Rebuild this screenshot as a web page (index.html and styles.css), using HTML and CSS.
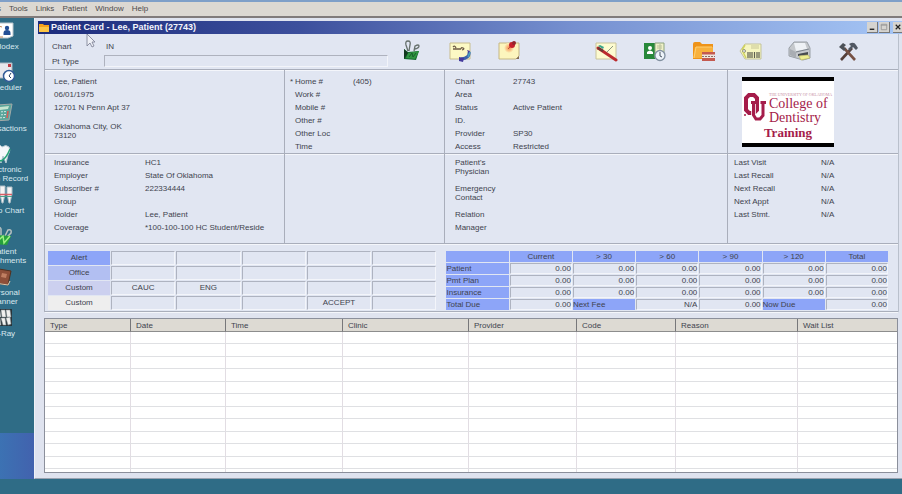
FILE: index.html
```html
<!DOCTYPE html>
<html lang="en">
<head>
<meta charset="utf-8">
<title>Patient Card</title>
<link rel="stylesheet" href="styles.css">
</head>
<body>
<nav class="menubar">
  <button>s</button><button>Tools</button><button>Links</button><button>Patient</button><button>Window</button><button>Help</button>
</nav>
<div class="desktop">
  <aside class="launcher">
    <button class="app"><svg viewBox="0 0 32 21"><path d="M4 3h14v13H4z" fill="#e9edf0"/><path d="M16 2h14v13l-5 2h-9z" fill="#fff" stroke="#b8c4cc"/><circle cx="24" cy="7" r="2.2" fill="#234f96"/><path d="M20.500 14v-2q0-3 3.500-3t3.500 3v2z" fill="#234f96"/><path d="M12 4l7 2M11 16h9" stroke="#c4885b"/></svg><span>Rolodex</span></button>
    <button class="app"><svg viewBox="0 0 32 21"><path d="M6 1h23v15H6z" fill="#e8e8ec" stroke="#aab4be"/><path d="M8 4h9v9H8z" fill="#d3d6dc"/><path d="M25 2h3v3h-3z" fill="#c23b43"/><circle cx="26" cy="14" r="5.500" fill="#fff" stroke="#315b98" stroke-width="1.500"/><path d="M28 11l-2 3 2 2" fill="none" stroke="#253c60"/></svg><span>Scheduler</span></button>
    <button class="app"><svg viewBox="0 0 32 21"><path d="M14 2l15-1-3 16-15 1z" fill="#5aa59b" stroke="#a2aaa8"/><path d="M17 4l9-1-1 3-8 1z" fill="#c7e5d0"/><path d="M15 9l9-.5M15 12l8-.5M14 15l8-.5" stroke="#d2e7e2" stroke-dasharray="2 1"/><path d="M25 8l-1 7" stroke="#d95b54" stroke-width="1.500"/></svg><span>Transactions</span></button>
    <button class="app"><svg viewBox="0 0 32 21"><path d="M12 3q4-4 7 0 4-3 7 0 2 4-1 8l-2 8-3-7-2 7-4-8q-3-4-2-8z" fill="#f5f8fa" stroke="#b9cbd3"/><path d="M12 14l6 3q5-2 9-12" fill="none" stroke="#27a477" stroke-width="1.500"/></svg><span>Electronic<br>Exam Record</span></button>
    <button class="app"><svg viewBox="0 0 32 21"><path d="M10 2h5v7l-2 9h-1l-2-9zM17 1h5v8l-2 9h-1l-2-9zM24 2h5v7l-2 9h-1l-2-9z" fill="#f4f4f4" stroke="#aebfc7"/><path d="M9 9.500h20" stroke="#d65d64" stroke-width="1.500"/><path d="M9 11.500h20" stroke="#49a28b"/></svg><span>Perio Chart</span></button>
    <button class="app"><svg viewBox="0 0 32 21"><path d="M14 10V3q3-3 4 0v7M22 10l3-6q4-1 3 3l-4 4" fill="none" stroke="#b6c0c0" stroke-width="1.500"/><path d="M12 9l16 1-4 9-13-1z" fill="#25a13b"/><path d="M14 16l6-6 1 7 6-7" fill="none" stroke="#9cf183" stroke-width="1.500"/></svg><span>Patient<br>Attachments</span></button>
    <button class="app"><svg viewBox="0 0 32 21"><path d="M16 2l12 2-3 14-13-2z" fill="#8e4f39" stroke="#50301f"/><path d="M12 16l13 2 2-4" fill="none" stroke="#e0cbb0"/><path d="M19 6l5 1-1 4-5-1z" fill="#c07f62"/></svg><span>Personal<br>Planner</span></button>
    <button class="app"><svg viewBox="0 0 32 21"><path d="M5 1h24v17H5z" fill="#29343a"/><path d="M13 3h4l1 6h-4zM18 2h4l1 7h-4zM23 2h4l1 7h-4zM13 11l4-1 1 7h-3zM18 10h4l1 7h-3zM23 10l4-1 1 7-3 1z" fill="#f1f1ef" stroke="#8b9699" stroke-width=".5"/></svg><span>X-Ray</span></button>
    <div class="launcher-foot"></div>
  </aside>

  <main class="window">
    <header class="titlebar">
      <svg class="folder" viewBox="0 0 12 10"><path d="M1 1h4l1 1h5v7H1z" fill="#f7a21b"/><path d="M1 4h10v5H1z" fill="#fdc544"/></svg>
      <h1>Patient Card - Lee, Patient (27743)</h1>
      <div class="controls">
        <button aria-label="Minimize"><svg viewBox="0 0 11 11"><path d="M3 8h5" stroke="#222" stroke-width="1.500"/></svg></button>
        <button aria-label="Maximize"><svg viewBox="0 0 11 11"><path d="M2.500 2.500h6v6h-6zM2 3.500h7" fill="none" stroke="#999"/></svg></button>
        <button aria-label="Close" class="close"><svg viewBox="0 0 11 11"><path d="M3 3l5 5M8 3l-5 5" stroke="#222" stroke-width="1.300"/></svg></button>
      </div>
      <svg class="pointer" viewBox="0 0 10 16"><path d="M1 1v12l3-3 2 4 2-1-2-4h3z" fill="#eef0f6" stroke="#777b90" stroke-width=".8"/></svg>
    </header>

    <div class="card">
      <section class="band head">
        <div class="form">
          <span>Chart</span><span class="code">IN</span>
          <label for="pt">Pt Type</label><input id="pt" type="text">
        </div>
        <div class="tools">
          <button aria-label="Attachments"><svg viewBox="0 0 24 24"><path d="M8 11L6 5q-1-4 2-4t2 4L9 11M14 11l1-5q4-2 4 0t-4 3" fill="none" stroke="#66706c" stroke-width="1.300"/><path d="M4 9l4 3 11-1-3 9-12-1z" fill="#14682f"/><path d="M8 13l11-2-4 8-9-1z" fill="#2f9440"/><path d="M4 9v10l4-6z" fill="#12381f"/><path d="M9 17l3-4 1 4 3-4" fill="none" stroke="#17602b"/></svg></button>
          <button aria-label="Contact notes"><svg viewBox="0 0 24 24"><path d="M2 3h20v16H2z" fill="#fcf9c4" stroke="#c8bd8d"/><path d="M5 7q2-2 3 1M5 9h3M8 9h5M13 9q0-2 2-1t-1 2" fill="none" stroke="#6d5a45" stroke-width="1.300"/><path d="M21 12q1 6-8 7" fill="none" stroke="#3c63ac" stroke-width="3"/><path d="M19 10l3 1-1 3zM11 17l5 1-1 4-4-1z" fill="#443a9c"/><path d="M22 12l-2 5" stroke="#46a2bd" stroke-width="1.500"/></svg></button>
          <button aria-label="Notes"><svg viewBox="0 0 24 24"><defs><radialGradient id="glow"><stop stop-color="#f78b4d"/><stop offset="1" stop-color="#fcf5bd"/></radialGradient></defs><path d="M2 3h20v13l-3 3H2z" fill="#fcf5bd" stroke="#c5b783"/><circle cx="12" cy="8" r="5" fill="url(#glow)"/><path d="M11 9l4-4" stroke="#bd523d"/><circle cx="15" cy="5" r="3" fill="#c7202c"/><circle cx="17" cy="3" r="2" fill="#94252d"/><path d="M19 19l3-3v3z" fill="#806b51"/></svg></button>
          <span></span>
          <button aria-label="Treatment"><svg viewBox="0 0 24 24"><path d="M2 3h20v16H2z" fill="#fdfbd0" stroke="#c9c49b"/><path d="M12 13l7-7" stroke="#8b9882"/><path d="M4 8l18 12" stroke="#bb2b2e" stroke-width="3" stroke-linecap="round"/><path d="M4 8l5 3" stroke="#6d3a37" stroke-width="2.500"/><path d="M4 6l5 3 1-2-4-2z" fill="#3da58a"/></svg></button>
          <button aria-label="Appointments"><svg viewBox="0 0 24 24"><path d="M2 3h11v16H2z" fill="#27883a"/><path d="M13 3h9v15h-9z" fill="#eff1c8" stroke="#8da37e"/><circle cx="8" cy="8" r="2" fill="#fff"/><path d="M5 14v-2q3-3 6 0v2z" fill="#fff"/><path d="M15 6h5M15 8h5M18 4v7" stroke="#b9c09b"/><circle cx="18" cy="15.500" r="5" fill="#eef4fa" stroke="#8190a0" stroke-width="1.300"/><path d="M18 12v4l2 1" fill="none" stroke="#485260"/></svg></button>
          <button aria-label="Folder"><svg viewBox="0 0 24 24"><path d="M2 4q0-2 2-2h5l2 2h11v15H2z" fill="#ee9319"/><path d="M4 7h18v11H2z" fill="#f8b13c"/><path d="M3 18l2-11h16" fill="none" stroke="#ffd070"/><path d="M11 12h13v9H11z" fill="#c45a50"/><path d="M11 14.500h13v3.500H11z" fill="#eee5de"/><path d="M11 16.500h13" stroke="#8c6c67" stroke-dasharray="2 1"/></svg></button>
          <button aria-label="Label"><svg viewBox="0 0 24 24"><path d="M1 11l5-7h16v15H6z" fill="#f6f6c0" stroke="#c3c39b"/><circle cx="5" cy="11" r="1.500" fill="#e2e8f2" stroke="#929275"/><path d="M12 6h8M12 8h8" stroke="#c7c697"/><path d="M9 12v6M11 12v6M13 12v6M15.500 12v6M18 12v6M20 12v6" stroke="#5c5d4e" stroke-width="1.200"/><path d="M6 5l-3 5M4 12l3 6" stroke="#d0d35e" stroke-width="1.500"/></svg></button>
          <button aria-label="Print"><svg viewBox="0 0 24 24"><path d="M1 8l5-6h13l3 6v10l-7 2-14-4z" fill="#c5c8cc" stroke="#999fa6"/><path d="M6 3h11l2 6-11 2z" fill="#eef1f5"/><path d="M2 9l6 3v6l-6-3z" fill="#a9adb3"/><path d="M8 12l13-3" stroke="#7c838c"/><path d="M10 14l10-2v3l-10 1z" fill="#474b50"/><path d="M11 16l9-1 2 3-9 2z" fill="#eeef8f" stroke="#bdb969" stroke-width=".7"/></svg></button>
          <button aria-label="Setup"><svg viewBox="0 0 24 24"><path d="M5 20L16 8" stroke="#553f39" stroke-width="2.600"/><path d="M19 20L8 8" stroke="#765144" stroke-width="2.600"/><path d="M3 7l4-4 3 2-2 2 2 2-2 2z" fill="#4b5057"/><path d="M13 4q5-3 7 1l2 3-2 2-3-3-3 4-2-2 3-3z" fill="#515863"/></svg></button>
        </div>
      </section>

      <section class="band info">
        <div class="panel address">
          <p>Lee, Patient</p><p>06/01/1975</p><p>12701 N Penn Apt 37</p>
          <p class="city">Oklahoma City, OK<br>73120</p>
        </div>
        <dl class="panel phones">
          <dt class="primary">Home #</dt><dd>(405)</dd><dt>Work #</dt><dd></dd><dt>Mobile #</dt><dd></dd><dt>Other #</dt><dd></dd><dt>Other Loc</dt><dd></dd><dt>Time</dt><dd></dd>
        </dl>
        <dl class="panel chart">
          <dt>Chart</dt><dd>27743</dd><dt>Area</dt><dd></dd><dt>Status</dt><dd>Active Patient</dd><dt>ID.</dt><dd></dd><dt>Provider</dt><dd>SP30</dd><dt>Access</dt><dd>Restricted</dd>
        </dl>
        <div class="panel brand">
          <div class="logo">
            <svg class="ou" viewBox="0 0 24 30"><path d="M6 3h5l3 3v12l-3 3H6l-3-3V6z" fill="none" stroke="#a51c4a" stroke-width="4"/><path d="M10.500 12v11l2.500 3.500h4l3-3V12" fill="none" stroke="#fff" stroke-width="4.500"/><path d="M10.500 10v13l2.500 4h4l3-3.500V10M8 10.500h5M17.500 10.500h5.500" fill="none" stroke="#a51c4a" stroke-width="3"/><circle cx="2" cy="23" r="1" fill="#a51c4a"/></svg>
            <div class="school"><small>THE UNIVERSITY OF OKLAHOMA</small>College of<br>Dentistry</div>
            <strong>Training</strong>
          </div>
        </div>
      </section>

      <section class="band info lower">
        <dl class="panel insurance">
          <dt>Insurance</dt><dd>HC1</dd><dt>Employer</dt><dd>State Of Oklahoma</dd><dt>Subscriber #</dt><dd>222334444</dd><dt>Group</dt><dd></dd><dt>Holder</dt><dd>Lee, Patient</dd><dt>Coverage</dt><dd>*100-100-100 HC Student/Reside</dd>
        </dl>
        <div class="panel"></div>
        <dl class="panel chart">
          <dt class="tall">Patient's<br>Physician</dt><dd></dd><dt class="tall">Emergency<br>Contact</dt><dd></dd><dt>Relation</dt><dd></dd><dt>Manager</dt><dd></dd>
        </dl>
        <dl class="panel visits">
          <dt>Last Visit</dt><dd>N/A</dd><dt>Last Recall</dt><dd>N/A</dd><dt>Next Recall</dt><dd>N/A</dd><dt>Next Appt</dt><dd>N/A</dd><dt>Last Stmt.</dt><dd>N/A</dd>
        </dl>
      </section>

      <section class="band summary">
        <table class="flags">
          <tr><th class="alert">Alert</th><td></td><td></td><td></td><td></td><td></td></tr>
          <tr><th class="office">Office</th><td></td><td></td><td></td><td></td><td></td></tr>
          <tr><th class="custom">Custom</th><td>CAUC</td><td>ENG</td><td></td><td></td><td></td></tr>
          <tr><th class="plain">Custom</th><td></td><td></td><td></td><td>ACCEPT</td><td></td></tr>
        </table>
        <table class="aging">
          <thead><tr><th></th><th>Current</th><th>&gt; 30</th><th>&gt; 60</th><th>&gt; 90</th><th>&gt; 120</th><th>Total</th></tr></thead>
          <tbody>
          <tr><th>Patient</th><td>0.00</td><td>0.00</td><td>0.00</td><td>0.00</td><td>0.00</td><td>0.00</td></tr>
          <tr><th>Pmt Plan</th><td>0.00</td><td>0.00</td><td>0.00</td><td>0.00</td><td>0.00</td><td>0.00</td></tr>
          <tr><th>Insurance</th><td>0.00</td><td>0.00</td><td>0.00</td><td>0.00</td><td>0.00</td><td>0.00</td></tr>
          <tr><th>Total Due</th><td>0.00</td><th>Next Fee</th><td>N/A</td><td>0.00</td><th>Now Due</th><td>0.00</td></tr>
          </tbody>
        </table>
      </section>
    </div>

    <div class="schedule">
      <table>
        <colgroup><col class="w-type"><col class="w-date"><col class="w-time"><col class="w-clinic"><col class="w-provider"><col class="w-code"><col class="w-reason"><col class="w-wait"></colgroup>
        <thead><tr><th>Type</th><th>Date</th><th>Time</th><th>Clinic</th><th>Provider</th><th>Code</th><th>Reason</th><th>Wait List</th></tr></thead>
        <tbody>
          <tr><td></td><td></td><td></td><td></td><td></td><td></td><td></td><td></td></tr>
          <tr><td></td><td></td><td></td><td></td><td></td><td></td><td></td><td></td></tr>
          <tr><td></td><td></td><td></td><td></td><td></td><td></td><td></td><td></td></tr>
          <tr><td></td><td></td><td></td><td></td><td></td><td></td><td></td><td></td></tr>
          <tr><td></td><td></td><td></td><td></td><td></td><td></td><td></td><td></td></tr>
          <tr><td></td><td></td><td></td><td></td><td></td><td></td><td></td><td></td></tr>
          <tr><td></td><td></td><td></td><td></td><td></td><td></td><td></td><td></td></tr>
          <tr><td></td><td></td><td></td><td></td><td></td><td></td><td></td><td></td></tr>
          <tr><td></td><td></td><td></td><td></td><td></td><td></td><td></td><td></td></tr>
          <tr><td></td><td></td><td></td><td></td><td></td><td></td><td></td><td></td></tr>
          <tr><td></td><td></td><td></td><td></td><td></td><td></td><td></td><td></td></tr>
          <tr><td></td><td></td><td></td><td></td><td></td><td></td><td></td><td></td></tr>
        </tbody>
      </table>
    </div>
  </main>
</div>
</body>
</html>
```
FILE: styles.css
```css
* { box-sizing: border-box; margin: 0; padding: 0; }
html, body { height: 100%; }
body {
  display: flex; flex-direction: column; overflow: hidden;
  background: #2f6c86; color: #40434e;
  font: 8px/13px "Liberation Sans", sans-serif;
}
button { border: 0; background: none; color: inherit; font: inherit; }
svg { display: block; }
th { font-weight: normal; }
table { table-layout: fixed; }

.menubar {
  display: flex; gap: 8px; flex: none; height: 18px;
  border-top: 2px solid #7f9fc8; border-bottom: 2px solid #817b7b;
  background: #dcd8d2; color: #4d4b4c; line-height: 14px;
}
.menubar button:first-child { margin-left: -3px; }

.desktop { display: flex; flex: 1; min-height: 0; padding-bottom: 15px; }

.launcher { display: flex; flex-direction: column; flex: none; width: 34px; padding-top: 3px; overflow: hidden; }
.app {
  display: flex; flex-direction: column; align-items: center; flex: none;
  width: 80px; height: 41px; margin-left: -36px;
  color: #d9e8ef; line-height: 9px; text-align: center;
}
.app svg { width: 32px; height: 21px; margin-right: 10px; flex: none; }
.launcher-foot { height: 46px; margin-top: auto; background: linear-gradient(90deg, #3c72b3, #4262ae); }

.window {
  display: flex; flex-direction: column; flex: 1; min-width: 0;
  padding: 3px 0 5px 3px;
  border-left: 1px solid #eef1f6; border-bottom: 1px solid #9aa2b0;
  background: #dfe3ef;
}
.titlebar {
  position: relative; display: flex; align-items: center; flex: none;
  height: 13px;
  background: linear-gradient(90deg, #1c2c7c, #3c4f9c 30%, #7690d0 62%, #a5c5f5);
}
.titlebar h1 { flex: 1; padding-left: 1px; color: #f4f5fc; font-size: 9px; line-height: 13px; }
.folder { width: 12px; height: 10px; }
.controls { display: flex; gap: 1px; margin-right: -2px; }
.controls button { width: 11px; height: 11px; background: #d6d4d0; border-right: 1px solid #777; border-bottom: 1px solid #777; }
.controls .close { margin-left: 2px; }
.pointer { position: absolute; left: 48px; top: 12px; width: 10px; height: 16px; }

.card {
  flex: none; margin: 0 3px 0 6px;
  border-left: 1px solid #abb0bc; border-right: 1px solid #b9c0cc;
  background: #e1e6f2;
}
.band { border-bottom: 1px solid #a9aebb; box-shadow: 0 1px #f4f6fb; }

.head { display: flex; gap: 12px; height: 36px; padding-right: 38px; }
.form {
  display: grid; grid-template-columns: 52px 1fr; grid-template-rows: 15px 13px;
  flex: 336; padding: 6px 0 0 7px;
}
.form .code { padding-left: 2px; }
.form input { min-width: 0; height: 12px; border: 1px solid #aeb2be; border-right-color: #f2f4f9; border-bottom-color: #f2f4f9; background: #e1e6f2; font: inherit; }
.tools { display: flex; justify-content: space-between; align-items: center; flex: 460; }
.tools button, .tools span, .tools svg { width: 24px; height: 24px; }

.info {
  display: grid; height: 84px;
  grid-template-columns: minmax(0, 240fr) minmax(0, 160fr) minmax(0, 283fr) minmax(0, 170fr);
}
.lower { height: 90px; }
.panel { padding: 5px 0 0 9px; border-right: 1px solid #a9aebb; }
.panel:last-child { border-right: 0; }
.lower .panel { padding-top: 2px; }
dl.panel { display: grid; grid-auto-rows: 13px; align-content: start; }
.city { padding-top: 8px; line-height: 9px; }
dl.phones { grid-template-columns: 58px 1fr; padding-left: 10px; }
.primary::before { content: "*"; float: left; margin-left: -5px; }
dl.chart { grid-template-columns: 58px 1fr; padding-left: 10px; }
dl.insurance { grid-template-columns: 91px 1fr; }
dl.visits { grid-template-columns: 87px 1fr; padding-left: 6px; }
.tall { grid-row: span 2; padding-top: 2px; line-height: 9px; }
.tall + dd { grid-row: span 2; }
dd { white-space: nowrap; }

.panel.brand { padding: 7px 0 0 14px; }
.logo {
  display: grid; grid-template-columns: 25px 1fr; align-content: start; width: 92px; height: 70px;
  padding-top: 11px; border: solid #000; border-width: 4px 0;
  background: #fff; color: #a51c4a; font-family: "Liberation Serif", serif;
}
.ou { width: 24px; height: 30px; margin-left: 1px; }
.school { padding-left: 2px; font-size: 14px; line-height: 14px; white-space: nowrap; }
.school small { display: block; font-size: 4px; line-height: 5px; color: #c88fa4; }
.logo strong { grid-column: 1 / 3; font-size: 13px; line-height: 15px; text-align: center; }

.summary { display: grid; grid-template-columns: 390fr 443fr; column-gap: 8px; padding: 6px 9px 0 2px; height: 68px; }
.summary table { width: 100%; height: 61px; border-spacing: 1px; }
.summary td { border: 1px solid #aeb3c0; border-right-color: #f3f5fa; border-bottom-color: #f3f5fa; }
.flags { line-height: 12px; text-align: center; }
.flags tr { height: 14px; }
.flags th { width: 62px; }
.alert { background: #8da5f8; }
.office { background: #b2bff2; }
.custom { background: #ccd0ef; }
.plain { background: #eeeeee; }
.aging { line-height: 9px; }
.aging tr { height: 11px; }
.aging th { background: #8da5f8; }
.aging tbody th { text-align: left; }
.aging td { text-align: right; }

.schedule { flex: 1; min-height: 0; margin: 6px 4px 0 6px; overflow: hidden; border: 1px solid #8b8f9b; background: #fff; }
.schedule table { width: 100%; border-spacing: 0; }
.schedule th { height: 13px; padding-left: 5px; border-right: 1px solid #77777a; border-bottom: 1px solid #8d8d8d; background: #dddad3; text-align: left; line-height: 11px; }
.schedule td { height: 12px; border-right: 1px solid #e2dde3; border-bottom: 1px solid #dfe0e3; }
.schedule tr:nth-child(even) td { height: 13px; }
.w-type { width: 86px; }
.w-date { width: 95px; }
.w-time { width: 117px; }
.w-clinic { width: 126px; }
.w-provider { width: 108px; }
.w-code { width: 99px; }
.w-reason { width: 122px; }
.w-wait { width: 100px; }
```
